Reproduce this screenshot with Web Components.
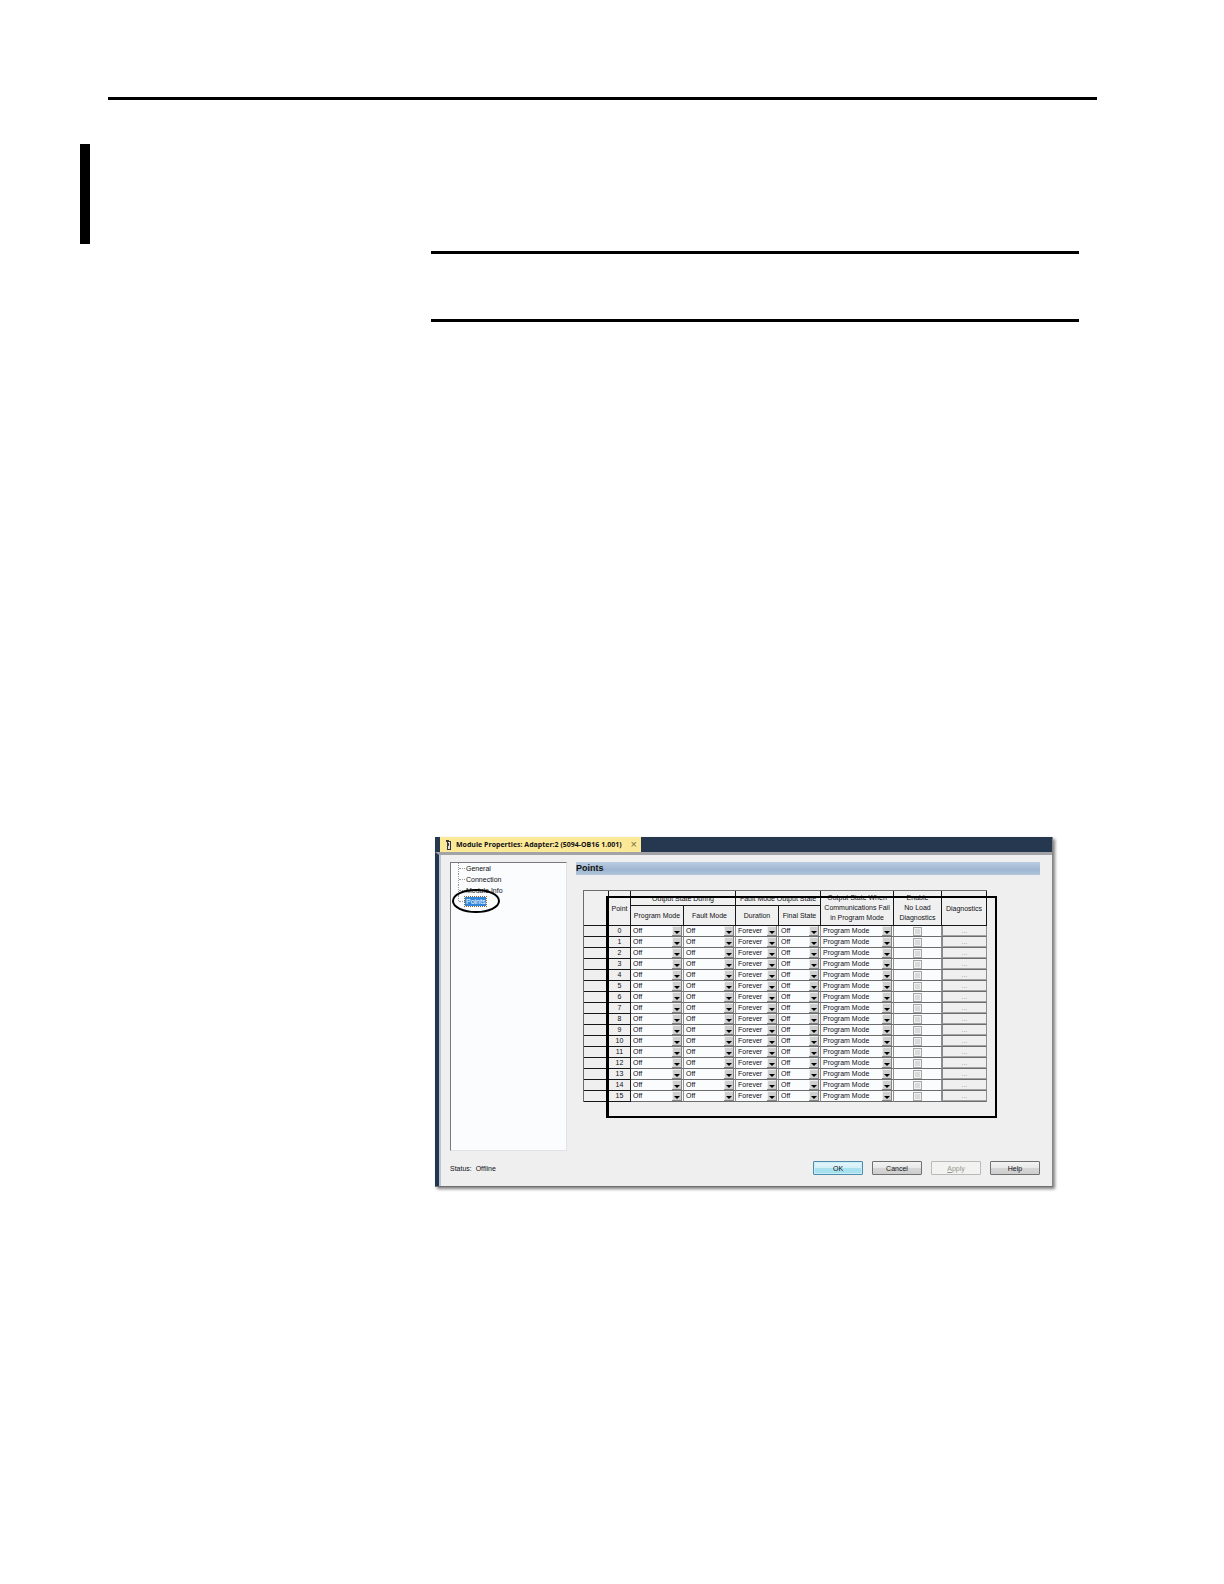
<!DOCTYPE html>
<html lang="en">
<head>
<meta charset="utf-8">
<title>Module Properties</title>
<style>
  body {
    margin: 0; background: #fff; color: #101016;
    font-family: "Liberation Sans", Arial, sans-serif;
    font-size: 7px; line-height: 11px;
  }
</style>
</head>
<body>
<manual-page>
  <module-dialog heading="Module Properties: Adapter:2 (5094-OB16 1.001)">
    <nav-tree slot="tree"></nav-tree>
    <points-table></points-table>
  </module-dialog>
</manual-page>

<script>
/* ─────────────────────────────────────────────
   <manual-page>  printed page with its rules
───────────────────────────────────────────── */
class ManualPage extends HTMLElement {
  connectedCallback() {
    this.attachShadow({ mode: "open" }).innerHTML = `
      <style>
        :host { display: block; box-sizing: border-box; min-height: 100vh; padding: 97px 127px 97px 80px; }
        header { height: 3px; background: #000; margin-left: 28px; }
        .change-bar { width: 10px; height: 100px; margin-top: 44px; background: #000; }
        .note {
          height: 65px; margin: 7px 18px 0 351px;
          border-top: 3px solid #000; border-bottom: 3px solid #000;
        }
        .figure { margin: 515px 44px 0 355px; }
      </style>
      <header></header>
      <div class="change-bar"></div>
      <div class="note"></div>
      <div class="figure"><slot></slot></div>
    `;
  }
}
customElements.define("manual-page", ManualPage);

/* ─────────────────────────────────────────────
   <module-dialog heading>
───────────────────────────────────────────── */
class ModuleDialog extends HTMLElement {
  connectedCallback() {
    this.attachShadow({ mode: "open" }).innerHTML = `
      <style>
        :host {
          display: block; background: #efefef;
          border-right: 1px solid #858585; border-bottom: 1px solid #6f6f6f;
          box-shadow: 2px 2px 3px rgba(0,0,0,.5);
        }
        .tabs { display: flex; background: #263850; padding-left: 5px; height: 15px; }
        .tab {
          display: flex; align-items: center; gap: 5px;
          background: #fbe998; padding: 0 4px 0 6px;
          font-family: "Open Sans", "Noto Sans", sans-serif; font-weight: 700;
        }
        .tab button {
          border: 0; padding: 0; margin-left: 4px; background: none; color: #746c48;
          font: 11px/11px "Liberation Sans", sans-serif;
        }
        .body {
          border-left: 4px solid #22364f; border-top: 3px solid #a2a3a6;
          box-shadow: inset 2px 0 #bcc4cf;
          padding: 7px 12px 11px 11px;
        }
        .panes { display: grid; grid-template-columns: 117px 1fr; gap: 9px; height: 289px; }
        h2 {
          margin: 0 0 15px; font-size: 9px; line-height: 13px; color: #111;
          background: linear-gradient(#bccde1, #9fb6d2 60%, #b3c5da);
        }
        .content { padding-left: 7px; }
        footer { display: flex; align-items: center; gap: 9px; margin-top: 10px; }
        .status { margin-right: auto; }
      </style>
      <div class="tabs">
        <div class="tab">
          <svg width="5" height="10" viewBox="0 0 5 10">
            <path d="M1 1h4v9H1z" fill="#35353a"/>
            <path d="M2 2h2v7H2z" fill="#e4e4e4"/>
            <path d="M2 3h1v3H2z" fill="#44444a"/><path d="M0 0h3v2H0z" fill="#35353a"/>
          </svg>
          <span>${this.getAttribute("heading")}</span>
          <button type="button" aria-label="Close">×</button>
        </div>
      </div>
      <div class="body">
        <div class="panes">
          <slot name="tree"></slot>
          <main>
            <h2>Points</h2>
            <div class="content"><slot></slot></div>
          </main>
        </div>
        <footer>
          <span class="status">Status:&nbsp; Offline</span>
          <push-button kind="primary">OK</push-button>
          <push-button>Cancel</push-button>
          <push-button kind="disabled"><u>A</u>pply</push-button>
          <push-button>Help</push-button>
        </footer>
      </div>
    `;
  }
}
customElements.define("module-dialog", ModuleDialog);

/* ─────────────────────────────────────────────
   <push-button kind>
───────────────────────────────────────────── */
class PushButton extends HTMLElement {
  connectedCallback() {
    const kind = this.getAttribute("kind") || "normal";
    this.attachShadow({ mode: "open" }).innerHTML = `
      <style>
        :host { display: block; width: 50px; }
        button {
          display: block; box-sizing: border-box; width: 100%; height: 14px; padding: 0;
          font: inherit; color: #101016; text-align: center;
          border: 1px solid #707070; border-radius: 1px;
          background: linear-gradient(#f3f3f3, #e8e8e8 50%, #d6d6d6 50%, #cdcdcd);
        }
        .primary {
          border-color: #4f8aa8;
          background: linear-gradient(#e6f6fb, #d2eff8 50%, #a9e0ee 50%, #a4e2ec);
          box-shadow: inset 0 0 0 1px #c5eef8;
        }
        .disabled { color: #96968e; border-color: #b9b9b9; background: #f2f2f1; }
      </style>
      <button type="button" class="${kind}" ${kind === "disabled" ? "disabled" : ""}><slot></slot></button>
    `;
  }
}
customElements.define("push-button", PushButton);

/* ─────────────────────────────────────────────
   <nav-tree>
───────────────────────────────────────────── */
class NavTree extends HTMLElement {
  connectedCallback() {
    const pages = ["General", "Connection", "Module Info", "Points"];
    this.attachShadow({ mode: "open" }).innerHTML = `
      <style>
        :host {
          display: block; background: #fafcfe;
          border: 1px solid #e2e2e4; border-top-color: #77797e; border-left-color: #77797e;
        }
        ul { list-style: none; margin: 0; padding: 0 0 0 7px; }
        li { display: flex; align-items: center; height: 11px; position: relative; }
        .twig { width: 6px; height: 11px; border-left: 1px dotted #999; }
        .twig::after { content: ""; display: block; height: 5px; border-bottom: 1px dotted #999; }
        li:last-child .twig { height: 5px; align-self: flex-start; }
        a { color: inherit; text-decoration: none; line-height: 9px; padding: 0 1px; }
        .on { background: #2f86dc; color: #fff; outline: 1px dotted #8a6a3a; }
        /* hand-drawn ring round the open page */
        svg { position: absolute; left: -6px; top: -7px; overflow: visible; }
      </style>
      <nav><ul>
        ${pages
          .map(
            (p) => `
          <li><span class="twig"></span><a href="#" class="${p === "Points" ? "on" : ""}">${p}</a>${
            p === "Points"
              ? `<svg width="48" height="24"><ellipse cx="24" cy="12" rx="23" ry="11" fill="none" stroke="#000" stroke-width="2"/></svg>`
              : ""
          }</li>`,
          )
          .join("")}
      </ul></nav>
    `;
  }
}
customElements.define("nav-tree", NavTree);

/* ─────────────────────────────────────────────
   <pick-list value label>
───────────────────────────────────────────── */
class PickList extends HTMLElement {
  connectedCallback() {
    this.attachShadow({ mode: "open" }).innerHTML = `
      <style>
        :host { display: grid; grid-template-columns: 1fr 10px 1px; height: 10px; }
        select {
          grid-area: 1 / 1 / 2 / 4; appearance: none; width: 100%; height: 10px;
          border: 0; border-radius: 0; margin: 0; padding: 0 11px 0 2px;
          background: none; color: inherit; font: inherit; line-height: 10px;
        }
        svg { grid-area: 1 / 2; pointer-events: none; }
      </style>
      <select aria-label="${this.getAttribute("label")}"><option>${this.getAttribute("value")}</option></select>
      <svg width="10" height="10" viewBox="0 0 10 10">
        <path d="M0 0h10v10H0z" fill="#cfcfcf"/>
        <path d="M0 9V0h9v1H1v8z" fill="#efefef"/>
        <path d="M9 0h1v10H0V9h9z" fill="#858585"/>
        <path d="M2 5h6L5 8z" fill="#000"/>
      </svg>
    `;
  }
}
customElements.define("pick-list", PickList);

/* ─────────────────────────────────────────────
   <points-table>
───────────────────────────────────────────── */
class PointsTable extends HTMLElement {
  connectedCallback() {
    const rows = Array.from({ length: 16 }, (_, n) => n);
    const pick = (label, value, n) =>
      `<td><pick-list label="${label}, point ${n}" value="${value}"></pick-list></td>`;

    this.attachShadow({ mode: "open" }).innerHTML = `
      <style>
        :host { display: block; position: relative; width: 404px; }
        table {
          table-layout: fixed; width: 404px; border-spacing: 0;
          box-sizing: border-box; border-top: 1px solid #6c6c6c; border-left: 1px solid #6c6c6c;
        }
        th, td { box-sizing: border-box; padding: 0; font-weight: 400; text-align: center; }
        thead th {
          border-right: 1px solid #18181a; border-bottom: 1px solid #18181a;
          white-space: nowrap; background: #f0f0f0;
        }
        .top { height: 15px; }
        .sub { height: 20px; }
        .top th { height: 15px; padding-top: 1px; line-height: 10px; }
        .sub th { height: 20px; line-height: 10px; }
        thead .stacked { padding: 0; }
        tbody tr { height: 11px; }
        tbody th, tbody td {
          height: 11px; line-height: 10px; background: #fbfcfe;
          border-right: 1px solid #8f8f8f; border-bottom: 1px solid #6c6c6c;
        }
        tbody th { background: #efefef; border-color: #18181a; }
        input {
          appearance: none; display: block; box-sizing: border-box;
          width: 9px; height: 9px; margin: 0 auto;
          border: 1px solid #a6a6a6; background: #dadada; box-shadow: inset 0 0 0 1px #f1f1f1;
        }
        td button {
          display: block; box-sizing: border-box; width: 100%; height: 10px; padding: 0;
          border: 0; border-bottom: 1px solid #a4a4a4; border-left: 1px solid #8a8a8a;
          background: #efefef; color: #9a9a9a; font: inherit; line-height: 8px;
        }
        .frame {
          position: absolute; top: 6px; left: 23px; right: -10px; bottom: -16px;
          border: 2px solid #000; border-left-width: 3px; pointer-events: none;
        }
      </style>
      <table>
        <colgroup>
          ${[25, 22, 53, 52, 43, 42, 73, 48, 45].map((w) => `<col style="width:${w}px">`).join("")}
        </colgroup>
        <thead>
          <tr class="top">
            <th rowspan="2"></th>
            <th rowspan="2">Point</th>
            <th colspan="2">Output State During</th>
            <th colspan="2">Fault Mode Output State</th>
            <th class="stacked" rowspan="2">Output State When<br>Communications Fail<br>in Program Mode</th>
            <th class="stacked" rowspan="2">Enable<br>No Load<br>Diagnostics</th>
            <th rowspan="2">Diagnostics</th>
          </tr>
          <tr class="sub">
            <th>Program Mode</th>
            <th>Fault Mode</th>
            <th>Duration</th>
            <th>Final State</th>
          </tr>
        </thead>
        <tbody>
          ${rows
            .map(
              (n) => `
            <tr>
              <th></th>
              <th>${n}</th>
              ${pick("Program Mode", "Off", n)}
              ${pick("Fault Mode", "Off", n)}
              ${pick("Duration", "Forever", n)}
              ${pick("Final State", "Off", n)}
              ${pick("Communications Fail", "Program Mode", n)}
              <td><input type="checkbox" disabled aria-label="No Load Diagnostics, point ${n}"></td>
              <td><button type="button" disabled>...</button></td>
            </tr>`,
            )
            .join("")}
        </tbody>
      </table>
      <div class="frame"></div>
    `;
  }
}
customElements.define("points-table", PointsTable);
</script>
</body>
</html>
